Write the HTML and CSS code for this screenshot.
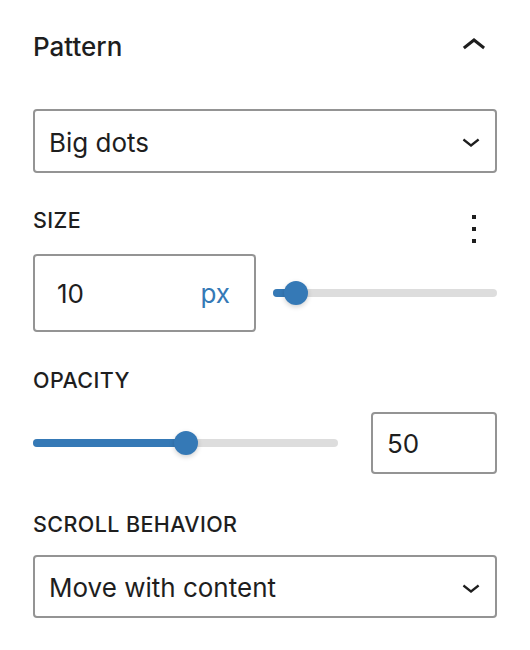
FILE: index.html
```html
<!DOCTYPE html>
<html>
<head>
<meta charset="utf-8">
<link rel="stylesheet" href="styles.css">
</head>
<body>
<div class="panel">
  <div class="header">
    <h2 class="title">Pattern</h2>
    <svg class="icon-up" width="48" height="48" viewBox="0 0 24 24"><path d="M6.5 12.4L12 8l5.5 4.4-.9 1.2L12 10l-4.6 3.6-1-1.2z" fill="#1e1e1e"/></svg>
  </div>

  <div class="select">
    <span class="select-text">Big dots</span>
    <svg class="icon-down" width="36" height="36" viewBox="0 0 24 24"><path d="M17.5 11.6L12 16l-5.5-4.4.9-1.2L12 14l4.6-3.6 1 1.2z" fill="#1e1e1e"/></svg>
  </div>

  <div class="label-row">
    <span class="label">SIZE</span>
    <svg class="icon-more" width="48" height="48" viewBox="0 0 24 24"><path d="M13 19h-2v-2h2v2zm0-6h-2v-2h2v2zm0-6h-2V5h2v2z" fill="#1e1e1e"/></svg>
  </div>

  <div class="size-row">
    <div class="unit-input">
      <span class="value">10</span>
      <span class="unit">px</span>
    </div>
    <div class="slider size-slider">
      <div class="track">
        <div class="fill" style="width: 23px"></div>
        <div class="thumb" style="left: 23px"></div>
      </div>
    </div>
  </div>

  <div class="label plain-label opacity-label">OPACITY</div>

  <div class="opacity-row">
    <div class="slider opacity-slider">
      <div class="track">
        <div class="fill" style="width: 153px"></div>
        <div class="thumb" style="left: 153px"></div>
      </div>
    </div>
    <div class="num-input"><span class="value">50</span></div>
  </div>

  <div class="label plain-label scroll-label">SCROLL BEHAVIOR</div>

  <div class="select select-scroll">
    <span class="select-text">Move with content</span>
    <svg class="icon-down" width="36" height="36" viewBox="0 0 24 24"><path d="M17.5 11.6L12 16l-5.5-4.4.9-1.2L12 14l4.6-3.6 1 1.2z" fill="#1e1e1e"/></svg>
  </div>
</div>
</body>
</html>
```

FILE: styles.css
```css
html, body {
  margin: 0;
  padding: 0;
  background: #ffffff;
}

body {
  font-family: Inter, "Liberation Sans", Arial, sans-serif;
  color: #1e1e1e;
  width: 530px;
  height: 650px;
  overflow: hidden;
}

.panel {
  padding: 0 33px;
}

.header {
  display: flex;
  justify-content: space-between;
  align-items: flex-start;
  height: 109px;
}

.title {
  margin: 31px 0 0 0;
  font-size: 26px;
  line-height: 32px;
  font-weight: 500;
}

.icon-up {
  display: block;
  margin-top: 22px;
  margin-right: -1px;
}

.select {
  box-sizing: border-box;
  height: 64px;
  border: 2px solid #949494;
  border-radius: 4px;
  display: flex;
  align-items: center;
  justify-content: space-between;
  padding-left: 14px;
  padding-right: 6px;
}

.select-text {
  font-size: 26px;
  line-height: 32px;
  padding-top: 3px;
}

.icon-down {
  display: block;
}

.label-row {
  display: flex;
  justify-content: space-between;
  align-items: flex-start;
  margin-top: 32px;
  height: 48px;
}

.label {
  font-size: 21.5px;
  line-height: 22px;
  font-weight: 500;
  letter-spacing: 0.4px;
}

.label-row .label {
  margin-top: 4px;
}

.icon-more {
  display: block;
  margin-right: -1px;
}

.size-row {
  display: flex;
  align-items: center;
  margin-top: 1px;
  gap: 17px;
}

.unit-input {
  box-sizing: border-box;
  width: 223px;
  height: 78px;
  border: 2px solid #949494;
  border-radius: 4px;
  display: flex;
  align-items: center;
  justify-content: space-between;
  padding: 2px 24px 0 22px;
}

.value {
  font-size: 26px;
  line-height: 32px;
}

.unit {
  font-size: 26px;
  line-height: 32px;
  color: #3579b6;
}

.slider {
  flex: 1;
  display: flex;
  align-items: center;
  height: 24px;
}

.track {
  position: relative;
  width: 100%;
  height: 8px;
  border-radius: 4px;
  background: #dddddd;
}

.fill {
  height: 8px;
  border-radius: 4px;
  background: #3579b6;
}

.thumb {
  position: absolute;
  top: -8px;
  width: 24px;
  height: 24px;
  margin-left: -12px;
  border-radius: 50%;
  background: #3579b6;
  box-shadow: 0 2px 5px rgba(0, 0, 0, 0.18);
}

.opacity-label {
  margin-top: 37px;
}

.opacity-row {
  display: flex;
  align-items: center;
  margin-top: 21px;
  gap: 33px;
}

.opacity-slider {
  flex: 0 0 305px;
}

.num-input {
  box-sizing: border-box;
  width: 126px;
  height: 62px;
  border: 2px solid #949494;
  border-radius: 4px;
  display: flex;
  align-items: center;
  padding: 2px 14px 0 14px;
}

.scroll-label {
  margin-top: 39px;
}

.select-scroll {
  margin-top: 20px;
  height: 63px;
}
```
